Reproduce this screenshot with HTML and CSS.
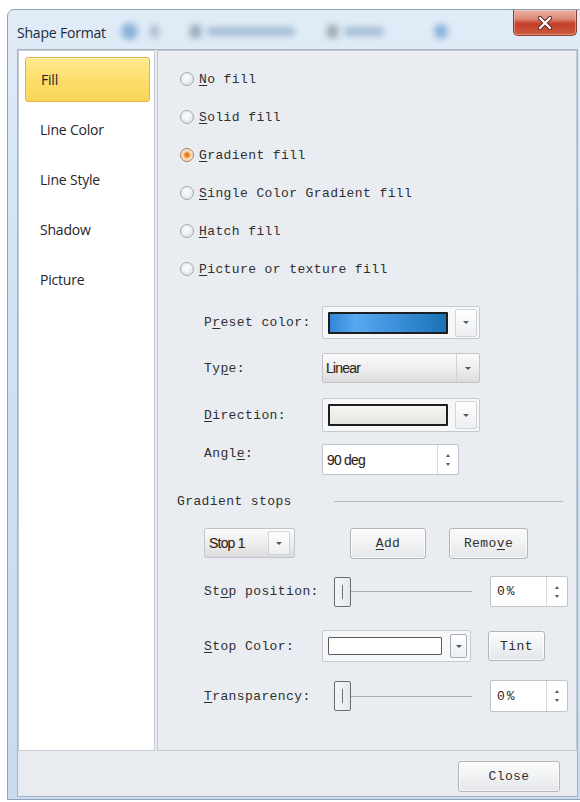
FILE: index.html
```html
<!DOCTYPE html>
<html lang="en">
<head>
<meta charset="utf-8">
<title>Shape Format</title>
<link rel="stylesheet" href="styles.css">
</head>
<body>
<div class="window">
  <div class="titlebar">
    <span class="title">Shape Format</span>
    <span class="ghost ghost-dot-blue"></span>
    <span class="ghost ghost-dot-grey"></span>
    <span class="ghost ghost-icon"></span>
    <span class="ghost ghost-text ghost-wide"></span>
    <span class="ghost ghost-icon ghost-icon-2"></span>
    <span class="ghost ghost-text ghost-short"></span>
    <span class="ghost ghost-dot-blue ghost-dot-end"></span>
    <button class="close-x" type="button" aria-label="Close">
      <svg width="16" height="14" viewBox="0 0 16 14">
        <path d="M3 2 L13 12 M13 2 L3 12" stroke="#5a2a22" stroke-width="4.2" stroke-linecap="round"/>
        <path d="M3 2 L13 12 M13 2 L3 12" stroke="#ffffff" stroke-width="2.4" stroke-linecap="round"/>
      </svg>
    </button>
  </div>

  <div class="client">
    <div class="panes">
      <nav class="nav">
        <div class="nav-item active">Fill</div>
        <div class="nav-item">Line Color</div>
        <div class="nav-item">Line Style</div>
        <div class="nav-item">Shadow</div>
        <div class="nav-item">Picture</div>
      </nav>

      <section class="content">
        <div class="fill-options">
          <div class="radio-row"><span class="radio"></span><span class="mono"><u>N</u>o fill</span></div>
          <div class="radio-row"><span class="radio"></span><span class="mono"><u>S</u>olid fill</span></div>
          <div class="radio-row"><span class="radio checked"></span><span class="mono"><u>G</u>radient fill</span></div>
          <div class="radio-row"><span class="radio"></span><span class="mono"><u>S</u>ingle Color Gradient fill</span></div>
          <div class="radio-row"><span class="radio"></span><span class="mono"><u>H</u>atch fill</span></div>
          <div class="radio-row"><span class="radio"></span><span class="mono"><u>P</u>icture or texture fill</span></div>
        </div>

        <div class="form-row row-preset">
          <span class="mono label">P<u>r</u>eset color:</span>
          <div class="combo">
            <span class="swatch swatch-blue"></span>
            <span class="combo-arrow"><i class="tri-down"></i></span>
          </div>
        </div>

        <div class="form-row row-type">
          <span class="mono label">Ty<u>p</u>e:</span>
          <div class="combo combo-text">
            <span class="combo-value">Linear</span>
            <span class="combo-split"><i class="tri-down"></i></span>
          </div>
        </div>

        <div class="form-row row-direction">
          <span class="mono label"><u>D</u>irection:</span>
          <div class="combo">
            <span class="swatch swatch-light"></span>
            <span class="combo-arrow"><i class="tri-down"></i></span>
          </div>
        </div>

        <div class="form-row row-angle">
          <span class="mono label">Angl<u>e</u>:</span>
          <div class="spin spin-angle">
            <span class="spin-value sans">90 deg</span>
            <span class="spin-btns"><i class="tri-up"></i><i class="tri-down"></i></span>
          </div>
        </div>

        <div class="group-head">
          <span class="mono">Gradient stops</span>
          <span class="group-rule"></span>
        </div>

        <div class="form-row row-stops">
          <div class="combo combo-text combo-stop">
            <span class="combo-value">Stop 1</span>
            <span class="combo-split"><i class="tri-down"></i></span>
          </div>
          <button class="btn mono btn-add" type="button"><u>A</u>dd</button>
          <button class="btn mono btn-remove" type="button">Remo<u>v</u>e</button>
        </div>

        <div class="form-row row-slider row-position">
          <span class="mono label label-wide">St<u>o</u>p position:</span>
          <div class="slider">
            <span class="thumb"></span>
            <span class="track"></span>
          </div>
          <div class="spin spin-pct">
            <span class="spin-value mono">0%</span>
            <span class="spin-btns"><i class="tri-up"></i><i class="tri-down"></i></span>
          </div>
        </div>

        <div class="form-row row-stopcolor">
          <span class="mono label"><u>S</u>top Color:</span>
          <div class="combo combo-color">
            <span class="swatch swatch-white"></span>
            <span class="combo-arrow combo-arrow-small"><i class="tri-down"></i></span>
          </div>
          <button class="btn mono btn-tint" type="button">Tint</button>
        </div>

        <div class="form-row row-slider row-transparency">
          <span class="mono label label-wide"><u>T</u>ransparency:</span>
          <div class="slider">
            <span class="thumb"></span>
            <span class="track"></span>
          </div>
          <div class="spin spin-pct">
            <span class="spin-value mono">0%</span>
            <span class="spin-btns"><i class="tri-up"></i><i class="tri-down"></i></span>
          </div>
        </div>
      </section>
    </div>

    <div class="footer">
      <button class="btn mono btn-close" type="button">Close</button>
    </div>
  </div>
</div>
</body>
</html>
```

FILE: styles.css
```css
html, body {
  margin: 0;
  padding: 0;
  background: #ffffff;
  overflow: hidden;
}

body {
  width: 580px;
  height: 802px;
  font-family: "Open Sans", "Noto Sans", sans-serif;
}

/* ---- window frame ---- */
.window {
  box-sizing: border-box;
  margin: 9px 0 0 7px;
  width: 578px;
  height: 791px;
  border: 1px solid #8ea2ba;
  border-radius: 7px 7px 0 0;
  background: linear-gradient(180deg, #e0ecf7 0%, #cfe1f3 40%, #c9dcef 100%);
  padding: 0 6px 2px 9px;
  display: flex;
  flex-direction: column;
}

.titlebar {
  position: relative;
  height: 39px;
  flex: none;
  display: flex;
  align-items: center;
  padding-top: 4px;
  box-sizing: border-box;
}

.title {
  font-family: "Open Sans", sans-serif;
  font-size: 14px;
  color: #1d2a3b;
  letter-spacing: -0.2px;
  white-space: nowrap;
  margin-top: 2px;
}

/* blurred toolbar seen through the glass */
.ghost {
  flex: none;
  display: block;
  filter: blur(3px);
}
.ghost-dot-blue {
  width: 17px;
  height: 17px;
  border-radius: 50%;
  background: #8ab1da;
  margin-left: 15px;
}
.ghost-dot-grey {
  width: 9px;
  height: 13px;
  border-radius: 3px;
  background: #aebccb;
  margin-left: 12px;
}
.ghost-icon {
  width: 11px;
  height: 13px;
  border-radius: 3px;
  background: #98a9ba;
  margin-left: 31px;
}
.ghost-icon-2 {
  margin-left: 32px;
  background: #9ea8b3;
}
.ghost-text {
  height: 9px;
  border-radius: 4px;
  background: #a6bdd6;
  margin-left: 6px;
}
.ghost-wide { width: 88px; }
.ghost-short { width: 40px; }
.ghost-dot-end {
  width: 14px;
  height: 15px;
  margin-left: 50px;
}

.close-x {
  position: absolute;
  right: 1px;
  top: 0;
  width: 64px;
  height: 26px;
  box-sizing: border-box;
  border: 1px solid #8d3d30;
  border-top: none;
  border-radius: 0 0 5px 5px;
  background: linear-gradient(180deg, #ecb2a5 0%, #dc8c79 35%, #c5402b 55%, #cd5a3c 100%);
  box-shadow: inset 0 0 0 1px rgba(255, 210, 195, 0.45);
  display: flex;
  align-items: center;
  justify-content: center;
  padding: 0;
}

/* ---- client area ---- */
.client {
  flex: 1;
  display: flex;
  flex-direction: column;
  border: 1px solid #a9b2be;
  background: #e8ebf0;
}

.panes {
  display: flex;
  gap: 2px;
  height: 701px;
  flex: none;
}

.nav {
  box-sizing: border-box;
  width: 137px;
  border: 1px solid #c6ccd4;
  background: #ffffff;
  padding: 6px 0 0 6px;
}

.nav-item {
  box-sizing: border-box;
  width: 125px;
  height: 45px;
  margin-bottom: 5px;
  padding-left: 15px;
  display: flex;
  align-items: center;
  font-size: 14px;
  color: #262429;
  letter-spacing: -0.2px;
}

.nav-item.active {
  border: 1px solid #e2b54b;
  border-radius: 3px;
  background: linear-gradient(180deg, #fde98f 0%, #fcdd6a 55%, #fbd55a 100%);
  box-shadow: inset 0 1px 0 #fff3c0;
}

.content {
  box-sizing: border-box;
  flex: 1;
  border: 1px solid #c2c8d0;
  background: #e9ecf1;
  padding: 9px 0 0 0;
}

.mono {
  font-family: "Liberation Mono", "DejaVu Sans Mono", monospace;
  font-size: 13px;
  letter-spacing: 0.4px;
  color: #2f2f2f;
  white-space: nowrap;
}

.sans {
  font-family: "Liberation Sans", Arial, sans-serif;
}

u {
  text-underline-offset: 2px;
}

/* ---- fill type radios ---- */
.fill-options {
  padding-left: 22px;
}

.radio-row {
  height: 38px;
  display: flex;
  align-items: center;
  gap: 5px;
}

.radio {
  box-sizing: border-box;
  width: 14px;
  height: 14px;
  border-radius: 50%;
  border: 1px solid #a3a9b1;
  background: radial-gradient(circle at 45% 40%, #ffffff 0%, #e8eaed 60%, #d2d6db 100%);
  flex: none;
}

.radio.checked {
  border-color: #b27a5a;
  background: radial-gradient(circle, #e5521a 0%, #f39a3c 30%, #f7d7b3 45%, #e9e4df 75%, #d0cdca 100%);
}

/* ---- form rows ---- */
.form-row {
  display: flex;
  align-items: center;
  padding-left: 46px;
}

.label {
  width: 118px;
  flex: none;
}

.label-wide {
  width: 130px;
}

.row-preset { margin-top: 18px; height: 33px; }
.row-type { margin-top: 14px; height: 30px; }
.row-direction { margin-top: 15px; height: 34px; }
.row-angle { margin-top: 12px; height: 31px; align-items: flex-start; }
.row-angle .label { padding-top: 2px; }

.combo {
  box-sizing: border-box;
  width: 158px;
  height: 100%;
  border: 1px solid #c4c9d0;
  border-radius: 2px;
  background: #f6f7f8;
  display: flex;
  align-items: center;
  padding: 0 2px 0 5px;
  gap: 7px;
}

.swatch {
  box-sizing: border-box;
  width: 120px;
  height: 22px;
  border: 2px solid #1d1d1d;
  border-radius: 1px;
  flex: none;
}

.swatch-blue {
  background: linear-gradient(90deg, #2f87d8 0%, #58a9ef 22%, #3d92dc 55%, #1a72b4 100%);
}

.swatch-light {
  background: linear-gradient(180deg, #f6f6f3 0%, #e4e4df 100%);
}

.swatch-white {
  width: 114px;
  height: 18px;
  border: 1px solid #5a5a5a;
  background: #ffffff;
}

.combo-arrow {
  box-sizing: border-box;
  width: 22px;
  height: 28px;
  margin-left: auto;
  border: 1px solid #d0d4d9;
  border-radius: 2px;
  background: linear-gradient(180deg, #ffffff 0%, #eceef0 100%);
  display: flex;
  align-items: center;
  justify-content: center;
}

.combo-arrow-small {
  width: 17px;
  height: 24px;
  margin-right: 1px;
  border-color: #a7adb5;
}

.combo-text {
  background: linear-gradient(180deg, #fbfbfb 0%, #eeeeee 50%, #dcdcdc 100%);
  padding: 0 0 0 3px;
  border-color: #c0c5cc;
}

.combo-value {
  font-family: "Liberation Sans", Arial, sans-serif;
  font-size: 14px;
  letter-spacing: -0.8px;
  color: #2a241e;
  text-shadow: -0.4px 0 0 rgba(200, 120, 40, 0.35);
}

.combo-split {
  box-sizing: border-box;
  margin-left: auto;
  width: 23px;
  height: 100%;
  border-left: 1px solid #cfd2d6;
  display: flex;
  align-items: center;
  justify-content: center;
}

.tri-down, .tri-up {
  display: block;
  width: 0;
  height: 0;
  border-left: 3px solid transparent;
  border-right: 3px solid transparent;
}

.tri-down { border-top: 3px solid #55595e; }
.tri-up { border-bottom: 3px solid #55595e; }

/* spin boxes */
.spin {
  box-sizing: border-box;
  height: 100%;
  border: 1px solid #c0c5cc;
  border-radius: 2px;
  background: #ffffff;
  display: flex;
  align-items: stretch;
}

.spin-angle { width: 137px; }

.spin-value {
  flex: 1;
  display: flex;
  align-items: center;
  padding-left: 4px;
  font-size: 13px;
  color: #2a241e;
}

.spin-angle .spin-value {
  font-size: 14px;
  letter-spacing: -0.8px;
  text-shadow: -0.4px 0 0 rgba(200, 120, 40, 0.35);
}

.spin-btns {
  box-sizing: border-box;
  width: 21px;
  border-left: 1px solid #d6d9dd;
  display: flex;
  flex-direction: column;
  align-items: center;
  justify-content: center;
  gap: 6px;
}

.spin-btns .tri-up, .spin-btns .tri-down {
  border-left-width: 2.5px;
  border-right-width: 2.5px;
}

/* gradient stops group */
.group-head {
  margin-top: 17px;
  height: 18px;
  display: flex;
  align-items: center;
  padding-left: 19px;
  padding-right: 13px;
}

.group-rule {
  flex: 1;
  height: 1px;
  margin-left: 42px;
  background: #b4bac2;
}

.row-stops {
  margin-top: 18px;
  height: 30px;
}

.combo-stop {
  width: 91px;
  padding-left: 4px;
}

.combo-stop .combo-split {
  width: 22px;
  margin-right: 4px;
  height: 24px;
  border: 1px solid #d2d5d9;
  border-radius: 2px;
  background: linear-gradient(180deg, #ffffff 0%, #eceef0 100%);
}

.btn {
  box-sizing: border-box;
  height: 31px;
  border: 1px solid #b1b6bd;
  border-radius: 3px;
  background: linear-gradient(180deg, #fbfbfb 0%, #f1f2f3 50%, #e3e5e8 100%);
  box-shadow: inset 0 0 0 1px rgba(255, 255, 255, 0.7);
  padding: 0;
  color: #2f2f2f;
  cursor: default;
}

.btn-add { width: 76px; margin-left: 55px; }
.btn-remove { width: 79px; margin-left: 23px; }

/* sliders */
.row-position { margin-top: 18px; height: 31px; }
.row-transparency { margin-top: 18px; height: 32px; }

.slider {
  width: 138px;
  height: 100%;
  flex: none;
  display: flex;
  align-items: center;
}

.thumb {
  box-sizing: border-box;
  flex: none;
  width: 17px;
  height: 30px;
  border: 1px solid #686d74;
  border-radius: 2px;
  background: linear-gradient(90deg, #f4f5f6 0%, #e6e8ea 100%);
  position: relative;
}

.thumb::after {
  content: "";
  position: absolute;
  left: 7px;
  top: 7px;
  width: 1px;
  height: 14px;
  background: #6b7077;
}

.track {
  flex: 1;
  height: 1px;
  background: #a9aeb5;
}

.spin-pct {
  width: 78px;
  margin-left: 18px;
}

.spin-pct .spin-value {
  padding-left: 6px;
  letter-spacing: 2px;
}

/* stop colour */
.row-stopcolor {
  margin-top: 23px;
  height: 32px;
}

.combo-color {
  width: 149px;
  padding-left: 5px;
  gap: 8px;
}

.btn-tint {
  width: 57px;
  height: 30px;
  margin-left: 17px;
}

/* ---- footer ---- */
.footer {
  flex: 1;
  display: flex;
  justify-content: flex-end;
  align-items: flex-start;
  padding: 10px 17px 0 0;
}

.btn-close {
  width: 102px;
  height: 31px;
}
```
